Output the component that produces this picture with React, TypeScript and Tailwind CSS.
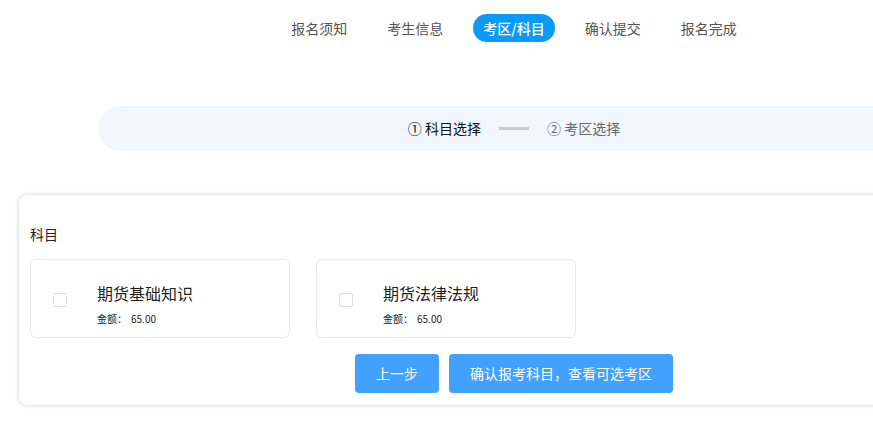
import React from "react";

const navItems = ["报名须知", "考生信息", "考区/科目", "确认提交", "报名完成"];

function SubjectCard({ title }: { title: string }) {
  return (
    <div className="w-[260px] h-[79px] border border-[#e8eaef] rounded-[6px] bg-white flex items-center">
      <div className="ml-[22px] mt-[2px] w-[14px] h-[14px] border border-[#dcdfe6] rounded-[2px] bg-white" />
      <div className="ml-[30px] flex flex-col">
        <div className="text-[16px] leading-[20px] text-[#1f1f1f] mt-[11px]">{title}</div>
        <div className="text-[10px] leading-[12px] text-[#222] mt-[10px] flex">
          <span>金额：</span>
          <span className="ml-[4px]">65.00</span>
        </div>
      </div>
    </div>
  );
}

export default function App() {
  return (
    <div
      className="w-[873px] h-[434px] overflow-hidden bg-white relative"
      style={{ fontFamily: '"Noto Sans CJK SC", "Noto Sans", sans-serif' }}
    >
      <div className="w-[990px] ml-[19px] flex flex-col">
        {/* top nav */}
        <div className="flex justify-center gap-[20px] mt-[14px] h-[28px]">
          {navItems.map((n, i) =>
            i === 2 ? (
              <div
                key={n}
                className="h-[28px] px-[10px] rounded-full bg-[#0b9bf6] text-white text-[14px] flex items-center font-medium"
              >
                {n}
              </div>
            ) : (
              <div key={n} className="h-[28px] px-[10px] text-[14px] text-[#555] flex items-center">
                {n}
              </div>
            )
          )}
        </div>

        {/* steps */}
        <div className="mx-auto w-[832px] h-[45px] mt-[64px] rounded-full bg-[#f2f7fd] flex items-center justify-center text-[14px]">
          <span className="text-[#111]">① 科目选择</span>
          <span className="w-[30px] h-[3px] bg-[#c8c8c8] mx-[18px]" />
          <span className="text-[#666]">② 考区选择</span>
        </div>

        {/* card */}
        <div className="mt-[44px] h-[210px] rounded-[8px] bg-white shadow-[0_0_4px_rgba(0,0,0,0.22)] px-[11px] flex flex-col">
          <div className="mt-[31px] text-[14px] leading-[16px] text-[#222]">科目</div>
          <div className="flex gap-[26px] mt-[17px]">
            <SubjectCard title="期货基础知识" />
            <SubjectCard title="期货法律法规" />
          </div>
          <div className="flex justify-center gap-[10px] mt-[16px] w-[968px]">
            <button className="w-[84px] h-[39px] rounded-[4px] bg-[#42a0ff] text-white text-[14px]">
              上一步
            </button>
            <button className="w-[224px] h-[39px] rounded-[4px] bg-[#42a0ff] text-white text-[14px]">
              确认报考科目，查看可选考区
            </button>
          </div>
        </div>
      </div>
    </div>
  );
}
